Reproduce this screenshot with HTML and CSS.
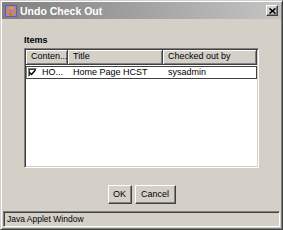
FILE: index.html
```html
<!DOCTYPE html>
<html>
<head>
<meta charset="utf-8">
<link rel="stylesheet" href="styles.css">
</head>
<body>
<div class="window">
  <div class="titlebar">
    <svg class="app-icon" width="12" height="12" viewBox="0 0 12 12">
      <rect x="0" y="0" width="12" height="12" fill="#9a86cf"/>
      <rect x="0.5" y="0.5" width="11" height="11" fill="none" stroke="#6a58a8"/>
      <circle cx="6" cy="6" r="3.4" fill="none" stroke="#e58c1c" stroke-width="2"/>
      <path d="M6 1.5 L8 3.5 L5.5 4" fill="#f2b640"/>
      <path d="M6 10.5 L4 8.5 L6.5 8" fill="#c8600c"/>
    </svg>
    <span class="title">Undo Check Out</span>
    <div class="close">
      <svg width="7" height="6" viewBox="0 0 7 6">
        <path d="M0.5 0.5 L6.5 5.5 M6.5 0.5 L0.5 5.5" stroke="#000" stroke-width="1.6"/>
      </svg>
    </div>
  </div>
  <div class="main">
    <div class="label">Items</div>
    <div class="table">
      <div class="thead">
        <div class="th c1">Conten...</div>
        <div class="th c2">Title</div>
        <div class="th c3">Checked out by</div>
      </div>
      <div class="row">
        <div class="td c1">
          <span class="check">
            <svg width="7" height="7" viewBox="0 0 7 7"><path d="M0.5 3.5 L2.5 5.5 L6.5 1" fill="none" stroke="#000" stroke-width="1.5"/></svg>
          </span>
          <span>HO...</span>
        </div>
        <div class="td c2">Home Page HCST</div>
        <div class="td c3">sysadmin</div>
      </div>
    </div>
    <div class="buttons">
      <div class="btn ok">OK</div>
      <div class="btn cancel">Cancel</div>
    </div>
  </div>
  <div class="status">Java Applet Window</div>
</div>
</body>
</html>
```
FILE: styles.css
```css
html, body {
  margin: 0;
  padding: 0;
  background: #d4d0c8;
}
body {
  font-family: "Liberation Sans", Arial, sans-serif;
  font-size: 9px;
  color: #000;
}
.window {
  width: 283px;
  height: 230px;
  box-sizing: border-box;
  border: 1px solid;
  border-color: #d4d0c8 #404040 #404040 #d4d0c8;
  box-shadow: inset 1px 1px #ffffff, inset -1px -1px #808080;
  padding: 1px;
  display: flex;
  flex-direction: column;
  background: #d4d0c8;
}
.titlebar {
  height: 17px;
  flex: none;
  display: flex;
  align-items: center;
  padding-left: 3px;
  background: linear-gradient(to right, #808080, #c4c4c4);
}
.app-icon {
  flex: none;
}
.title {
  color: #fff;
  font-weight: bold;
  font-size: 10.5px;
  margin-left: 3px;
  flex: 1;
}
.close {
  width: 12px;
  height: 11px;
  box-sizing: border-box;
  margin-right: 3px;
  background: #d4d0c8;
  border: 1px solid;
  border-color: #ffffff #404040 #404040 #ffffff;
  box-shadow: inset -1px -1px #808080;
  display: flex;
  align-items: center;
  justify-content: center;
}
.main {
  flex: 1;
  padding: 16px 22px 0 22px;
  display: flex;
  flex-direction: column;
}
.label {
  font-weight: bold;
  height: 11px;
  line-height: 11px;
  margin-bottom: 2px;
}
.table {
  height: 120px;
  box-sizing: border-box;
  border: 1px solid;
  border-color: #808080 #ffffff #ffffff #808080;
  box-shadow: inset 1px 1px #404040, inset -1px -1px #d4d0c8;
  padding: 1px;
  background: #ffffff;
}
.thead {
  display: flex;
  height: 15px;
}
.th {
  box-sizing: border-box;
  height: 15px;
  line-height: 13px;
  padding-left: 5px;
  background: #d4d0c8;
  border-right: 1px solid #404040;
  border-bottom: 1px solid #404040;
  box-shadow: inset 1px 1px #ffffff, inset -1px -1px #808080;
  white-space: nowrap;
  overflow: hidden;
}
.c1 { width: 42px; flex: none; }
.c2 { width: 95px; flex: none; }
.c3 { width: 94px; flex: none; }
.row {
  display: flex;
  height: 13px;
  margin-top: 1px;
  box-sizing: border-box;
  border: 1px solid #404040;
  border-left-color: #808080;
}
.td {
  box-sizing: border-box;
  line-height: 11px;
  padding-left: 5px;
  white-space: nowrap;
  overflow: hidden;
}
.row .c1 {
  width: 41px;
  padding-left: 1px;
  display: flex;
  align-items: center;
  gap: 5px;
}
.row .c3 {
  width: 93px;
}
.check {
  width: 9px;
  height: 9px;
  box-sizing: border-box;
  border: 1px solid;
  border-color: #808080 #ffffff #ffffff #808080;
  box-shadow: inset 1px 1px #404040;
  background: #fff;
  display: flex;
  align-items: center;
  justify-content: center;
  flex: none;
}
.buttons {
  display: flex;
  justify-content: center;
  gap: 3px;
  margin-top: 17px;
}
.btn {
  height: 19px;
  box-sizing: border-box;
  border: 1px solid;
  border-color: #ffffff #404040 #404040 #ffffff;
  box-shadow: inset -1px -1px #808080;
  line-height: 17px;
  text-align: center;
  background: #d4d0c8;
}
.ok { width: 24px; }
.cancel { width: 41px; }
.status {
  flex: none;
  height: 16px;
  margin: 0 1px 1px 1px;
  box-sizing: border-box;
  border: 1px solid;
  border-color: #808080 #ffffff #ffffff #808080;
  box-shadow: inset 1px 1px #404040;
  line-height: 14px;
  padding-left: 3px;
  font-size: 8.5px;
}
```
